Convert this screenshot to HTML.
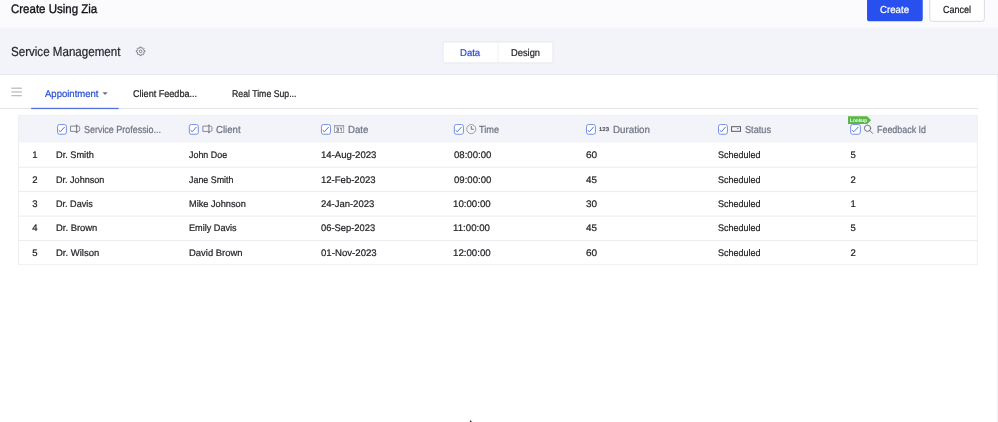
<!DOCTYPE html>
<html lang="en"><head><meta charset="utf-8"><title>Create Using Zia</title>
<style>
html,body{margin:0;padding:0;}
body{width:998px;height:422px;overflow:hidden;background:#ffffff;font-family:"Liberation Sans",sans-serif;}
#root{position:relative;width:998px;height:422px;overflow:hidden;background:#ffffff;}
.t{position:absolute;white-space:nowrap;margin:0;padding:0;text-rendering:geometricPrecision;transform-origin:0 0;-webkit-text-stroke:0.22px;}
.a{position:absolute;box-sizing:border-box;}
svg{position:absolute;overflow:visible;}
#txt{position:absolute;left:0;top:0;width:998px;height:422px;will-change:transform;}

</style></head>
<body>
<div id="root">
<svg width="998" height="422" viewBox="0 0 998 422" style="left:0;top:0;">
<rect x="0" y="0" width="998" height="27.8" fill="#fbfbfe"/>
<rect x="0" y="27.8" width="998" height="46.4" fill="#f3f4fa"/>
<rect x="0" y="74.1" width="998" height="0.9" fill="#e3e4ec"/>
<rect x="996.8" y="75" width="1.2" height="347" fill="#f0f0f6"/>
<rect x="867.05" y="-4" width="55.7" height="25.3" rx="2.6" fill="#2750ee"/>
<rect x="929.8" y="-4" width="54.6" height="25.3" rx="2.6" fill="#ffffff" stroke="#dadbe2" stroke-width="1"/>
<rect x="443.0" y="41.9" width="110.0" height="21.0" rx="1.5" fill="#ffffff" stroke="#e6e7ee" stroke-width="1"/>
<rect x="497.6" y="42.3" width="0.9" height="20.4" fill="#eeeff4"/>
<path d="M139.92 47.00 L141.28 47.00 L141.38 48.04 L142.35 48.44 L143.16 47.78 L144.12 48.74 L143.46 49.55 L143.86 50.52 L144.90 50.62 L144.90 51.98 L143.86 52.08 L143.46 53.05 L144.12 53.86 L143.16 54.82 L142.35 54.16 L141.38 54.56 L141.28 55.60 L139.92 55.60 L139.82 54.56 L138.85 54.16 L138.04 54.82 L137.08 53.86 L137.74 53.05 L137.34 52.08 L136.30 51.98 L136.30 50.62 L137.34 50.52 L137.74 49.55 L137.08 48.74 L138.04 47.78 L138.85 48.44 L139.82 48.04Z" fill="none" stroke="#62656d" stroke-width="0.75" stroke-linejoin="round"/>
<circle cx="140.6" cy="51.3" r="1.35" fill="none" stroke="#62656d" stroke-width="0.75"/>
<rect x="11.3" y="87.7" width="10.6" height="0.9" fill="#9fa0a5"/>
<rect x="11.3" y="91.5" width="10.6" height="0.9" fill="#9fa0a5"/>
<rect x="11.3" y="95.3" width="10.6" height="0.9" fill="#9fa0a5"/>
<path d="M102.5 92.2h5.2l-2.6 2.8z" fill="#666f94"/>
<rect x="0" y="108" width="978" height="1" fill="#e4e4e8"/>
<rect x="31.1" y="107.8" width="87.6" height="1.3" fill="#5571dc"/>
<rect x="18.1" y="115.2" width="959.4" height="27.3" fill="#f3f4fa"/>
<rect x="18.5" y="115.6" width="958.7" height="149.1" fill="none" stroke="#eeeef2" stroke-width="0.9"/>
<rect x="18.1" y="166.7" width="959.4" height="1" fill="#ececf0"/>
<rect x="18.1" y="191.1" width="959.4" height="1" fill="#ececf0"/>
<rect x="18.1" y="215.6" width="959.4" height="1" fill="#ececf0"/>
<rect x="18.1" y="240.0" width="959.4" height="1" fill="#ececf0"/>
<path d="M469.85 419.5V422.5H472.8z" fill="#111111" stroke="#ffffff" stroke-width="0.5"/>
</svg>
<svg width="998" height="422" viewBox="0 0 998 422" style="left:0;top:0;">
<rect x="57.52" y="124.55" width="8.90" height="9.7" rx="2" fill="#fffffc" stroke="#6683e6" stroke-width="0.9"/>
<path d="M59.07 130.6L60.47 131.7L64.32 127.3" fill="none" stroke="#3f62da" stroke-width="0.9" stroke-linecap="round" stroke-linejoin="round"/>
<rect x="189.30" y="124.55" width="9.00" height="9.7" rx="2" fill="#fffffc" stroke="#6683e6" stroke-width="0.9"/>
<path d="M190.87 130.6L192.28 131.7L196.17 127.3" fill="none" stroke="#3f62da" stroke-width="0.9" stroke-linecap="round" stroke-linejoin="round"/>
<rect x="321.45" y="124.55" width="9.10" height="9.7" rx="2" fill="#fffffc" stroke="#6683e6" stroke-width="0.9"/>
<path d="M323.04 130.6L324.47 131.7L328.40 127.3" fill="none" stroke="#3f62da" stroke-width="0.9" stroke-linecap="round" stroke-linejoin="round"/>
<rect x="454.35" y="124.55" width="9.10" height="9.7" rx="2" fill="#fffffc" stroke="#6683e6" stroke-width="0.9"/>
<path d="M455.94 130.6L457.37 131.7L461.30 127.3" fill="none" stroke="#3f62da" stroke-width="0.9" stroke-linecap="round" stroke-linejoin="round"/>
<rect x="586.52" y="124.55" width="8.90" height="9.7" rx="2" fill="#fffffc" stroke="#6683e6" stroke-width="0.9"/>
<path d="M588.07 130.6L589.47 131.7L593.32 127.3" fill="none" stroke="#3f62da" stroke-width="0.9" stroke-linecap="round" stroke-linejoin="round"/>
<rect x="718.52" y="124.55" width="8.90" height="9.7" rx="2" fill="#fffffc" stroke="#6683e6" stroke-width="0.9"/>
<path d="M720.07 130.6L721.47 131.7L725.32 127.3" fill="none" stroke="#3f62da" stroke-width="0.9" stroke-linecap="round" stroke-linejoin="round"/>
<rect x="850.65" y="124.55" width="9.70" height="9.7" rx="2" fill="#fffffc" stroke="#6683e6" stroke-width="0.9"/>
<path d="M852.36 130.6L853.88 131.7L858.04 127.3" fill="none" stroke="#3f62da" stroke-width="0.9" stroke-linecap="round" stroke-linejoin="round"/>
<g transform="translate(70.1,124.6)" fill="none" stroke="#6c6f77" stroke-width="0.8"><path d="M6 1.5H0.45V6.8H6"/><path d="M7 1.5H8Q9.6 1.5 9.6 3.2V5.1Q9.6 6.8 8 6.8H7"/><path d="M6.5 0.6V8M5.7 0.6H7.3M5.7 8H7.3" stroke="#55585f" stroke-width="0.8"/></g>
<g transform="translate(202.4,124.6)" fill="none" stroke="#6c6f77" stroke-width="0.8"><path d="M6 1.5H0.45V6.8H6"/><path d="M7 1.5H8Q9.6 1.5 9.6 3.2V5.1Q9.6 6.8 8 6.8H7"/><path d="M6.5 0.6V8M5.7 0.6H7.3M5.7 8H7.3" stroke="#55585f" stroke-width="0.8"/></g>
<g transform="translate(334.1,125)" fill="none"><rect x="0.4" y="0.4" width="9.2" height="7" stroke="#90939b" stroke-width="0.8" fill="#f9f9fc"/><path d="M0.4 1.9H9.6" stroke="#a0a3ab" stroke-width="0.7"/><path d="M2.2 3.1H4.2V6.3H2.2M2.8 4.7H4.2M6.0 3.6L7.2 3.0V6.5" stroke="#666971" stroke-width="0.85"/></g>
<g fill="none"><circle cx="471.25" cy="129.1" r="4.55" stroke="#80838b" stroke-width="0.75"/><path d="M471.3 126V129.25H473.9" stroke="#5a5d65" stroke-width="0.8"/></g>
<g transform="translate(731.1,126.2)"><rect x="0.5" y="0.5" width="8.9" height="4.6" fill="#f8f8fc" stroke="#55585f" stroke-width="1"/><path d="M5.6 2.1H7.8L6.7 3.2z" fill="#55585f"/></g>
<g fill="none" stroke="#5e6169" stroke-width="0.85" stroke-linecap="round"><circle cx="867.55" cy="128.25" r="3.15"/><path d="M869.9 130.6L872.8 133.5"/></g>
<path d="M848 116.3H867.2L871.1 120.15L867.2 124H848z" fill="#59b846"/>
</svg>

<div id="txt">
<div class="t" style="left:11.18px;top:3px;font-size:12.4px;line-height:12.4px;color:#111216;transform:scaleX(0.9271);-webkit-text-stroke:0.35px #111216;">Create Using Zia</div>
<div class="t" style="left:10.87px;top:45px;font-size:13.1px;line-height:13.1px;color:#24262b;transform:scaleX(0.8839);">Service Management</div>
<div class="t" style="left:880.31px;top:6px;font-size:10.1px;line-height:10.1px;color:#ffffff;transform:scaleX(0.9573);">Create</div>
<div class="t" style="left:942.94px;top:6px;font-size:10.1px;line-height:10.1px;color:#1b1c20;transform:scaleX(0.8925);">Cancel</div>
<div class="t" style="left:459.82px;top:49px;font-size:9.9px;line-height:9.9px;color:#2a4fd2;transform:scaleX(0.9652);">Data</div>
<div class="t" style="left:511.23px;top:49px;font-size:9.9px;line-height:9.9px;color:#222428;transform:scaleX(0.9434);">Design</div>
<div class="t" style="left:45.08px;top:90px;font-size:9.8px;line-height:9.8px;color:#2a4fd2;transform:scaleX(0.9721);">Appointment</div>
<div class="t" style="left:132.54px;top:90px;font-size:9.8px;line-height:9.8px;color:#222428;transform:scaleX(0.9264);">Client Feedba...</div>
<div class="t" style="left:231.89px;top:90px;font-size:9.8px;line-height:9.8px;color:#222428;transform:scaleX(0.8894);">Real Time Sup...</div>
<div class="t" style="left:83.69px;top:126px;font-size:10.2px;line-height:10.2px;color:#6e7280;transform:scaleX(0.8778);">Service Professio...</div>
<div class="t" style="left:216.31px;top:126px;font-size:10.2px;line-height:10.2px;color:#6e7280;transform:scaleX(0.9457);">Client</div>
<div class="t" style="left:348.01px;top:126px;font-size:10.2px;line-height:10.2px;color:#6e7280;transform:scaleX(0.9479);">Date</div>
<div class="t" style="left:479.29px;top:126px;font-size:10.2px;line-height:10.2px;color:#6e7280;transform:scaleX(0.9052);">Time</div>
<div class="t" style="left:612.60px;top:126px;font-size:10.2px;line-height:10.2px;color:#6e7280;transform:scaleX(0.9607);">Duration</div>
<div class="t" style="left:745.08px;top:126px;font-size:10.2px;line-height:10.2px;color:#6e7280;transform:scaleX(0.9008);">Status</div>
<div class="t" style="left:877.47px;top:126px;font-size:10.2px;line-height:10.2px;color:#6e7280;transform:scaleX(0.8748);">Feedback Id</div>
<div class="t" style="left:598.85px;top:128px;font-size:5.3px;line-height:5.3px;color:#3b3d44;letter-spacing:0.047px;transform:scaleX(1.1200);-webkit-text-stroke:0.2px #3b3d44;">123</div>
<div class="t" style="left:849.76px;top:120px;font-size:4.9px;line-height:4.9px;color:#ffffff;transform:scaleX(1.0677);-webkit-text-stroke:0.12px #ffffff;">Lookup</div>
<div class="t" style="left:32.13px;top:151px;font-size:9.5px;line-height:9.5px;color:#1f2024;">1</div>
<div class="t" style="left:56.34px;top:151px;font-size:9.5px;line-height:9.5px;color:#1f2024;transform:scaleX(0.9688);">Dr. Smith</div>
<div class="t" style="left:189.36px;top:151px;font-size:9.5px;line-height:9.5px;color:#1f2024;transform:scaleX(0.9377);">John Doe</div>
<div class="t" style="left:320.97px;top:151px;font-size:9.5px;line-height:9.5px;color:#1f2024;transform:scaleX(1.0095);">14-Aug-2023</div>
<div class="t" style="left:453.53px;top:151px;font-size:9.5px;line-height:9.5px;color:#1f2024;transform:scaleX(1.0100);">08:00:00</div>
<div class="t" style="left:585.59px;top:151px;font-size:9.5px;line-height:9.5px;color:#1f2024;transform:scaleX(1.0604);">60</div>
<div class="t" style="left:718.09px;top:151px;font-size:9.5px;line-height:9.5px;color:#1f2024;transform:scaleX(0.9486);">Scheduled</div>
<div class="t" style="left:850.57px;top:151px;font-size:9.5px;line-height:9.5px;color:#1f2024;">5</div>
<div class="t" style="left:32.26px;top:176px;font-size:9.5px;line-height:9.5px;color:#1f2024;">2</div>
<div class="t" style="left:56.36px;top:176px;font-size:9.5px;line-height:9.5px;color:#1f2024;transform:scaleX(0.9534);">Dr. Johnson</div>
<div class="t" style="left:189.36px;top:176px;font-size:9.5px;line-height:9.5px;color:#1f2024;transform:scaleX(0.9346);">Jane Smith</div>
<div class="t" style="left:320.97px;top:176px;font-size:9.5px;line-height:9.5px;color:#1f2024;transform:scaleX(1.0027);">12-Feb-2023</div>
<div class="t" style="left:453.53px;top:176px;font-size:9.5px;line-height:9.5px;color:#1f2024;transform:scaleX(1.0100);">09:00:00</div>
<div class="t" style="left:585.87px;top:176px;font-size:9.5px;line-height:9.5px;color:#1f2024;transform:scaleX(1.0352);">45</div>
<div class="t" style="left:718.09px;top:176px;font-size:9.5px;line-height:9.5px;color:#1f2024;transform:scaleX(0.9486);">Scheduled</div>
<div class="t" style="left:850.56px;top:176px;font-size:9.5px;line-height:9.5px;color:#1f2024;">2</div>
<div class="t" style="left:32.29px;top:200px;font-size:9.5px;line-height:9.5px;color:#1f2024;">3</div>
<div class="t" style="left:56.36px;top:200px;font-size:9.5px;line-height:9.5px;color:#1f2024;transform:scaleX(0.9543);">Dr. Davis</div>
<div class="t" style="left:188.74px;top:200px;font-size:9.5px;line-height:9.5px;color:#1f2024;transform:scaleX(0.9700);">Mike Johnson</div>
<div class="t" style="left:321.22px;top:200px;font-size:9.5px;line-height:9.5px;color:#1f2024;transform:scaleX(0.9972);">24-Jan-2023</div>
<div class="t" style="left:453.16px;top:200px;font-size:9.5px;line-height:9.5px;color:#1f2024;transform:scaleX(1.0199);">10:00:00</div>
<div class="t" style="left:585.72px;top:200px;font-size:9.5px;line-height:9.5px;color:#1f2024;transform:scaleX(1.0474);">30</div>
<div class="t" style="left:718.09px;top:200px;font-size:9.5px;line-height:9.5px;color:#1f2024;transform:scaleX(0.9486);">Scheduled</div>
<div class="t" style="left:850.43px;top:200px;font-size:9.5px;line-height:9.5px;color:#1f2024;">1</div>
<div class="t" style="left:32.29px;top:224px;font-size:9.5px;line-height:9.5px;color:#1f2024;">4</div>
<div class="t" style="left:56.33px;top:224px;font-size:9.5px;line-height:9.5px;color:#1f2024;transform:scaleX(0.9918);">Dr. Brown</div>
<div class="t" style="left:188.75px;top:224px;font-size:9.5px;line-height:9.5px;color:#1f2024;transform:scaleX(0.9610);">Emily Davis</div>
<div class="t" style="left:321.33px;top:224px;font-size:9.5px;line-height:9.5px;color:#1f2024;transform:scaleX(0.9863);">06-Sep-2023</div>
<div class="t" style="left:453.16px;top:224px;font-size:9.5px;line-height:9.5px;color:#1f2024;transform:scaleX(1.0199);">11:00:00</div>
<div class="t" style="left:585.87px;top:224px;font-size:9.5px;line-height:9.5px;color:#1f2024;transform:scaleX(1.0352);">45</div>
<div class="t" style="left:718.09px;top:224px;font-size:9.5px;line-height:9.5px;color:#1f2024;transform:scaleX(0.9486);">Scheduled</div>
<div class="t" style="left:850.57px;top:224px;font-size:9.5px;line-height:9.5px;color:#1f2024;">5</div>
<div class="t" style="left:32.27px;top:249px;font-size:9.5px;line-height:9.5px;color:#1f2024;">5</div>
<div class="t" style="left:56.32px;top:249px;font-size:9.5px;line-height:9.5px;color:#1f2024;transform:scaleX(0.9974);">Dr. Wilson</div>
<div class="t" style="left:188.73px;top:249px;font-size:9.5px;line-height:9.5px;color:#1f2024;transform:scaleX(0.9932);">David Brown</div>
<div class="t" style="left:321.32px;top:249px;font-size:9.5px;line-height:9.5px;color:#1f2024;transform:scaleX(1.0142);">01-Nov-2023</div>
<div class="t" style="left:453.16px;top:249px;font-size:9.5px;line-height:9.5px;color:#1f2024;transform:scaleX(1.0199);">12:00:00</div>
<div class="t" style="left:585.59px;top:249px;font-size:9.5px;line-height:9.5px;color:#1f2024;transform:scaleX(1.0604);">60</div>
<div class="t" style="left:718.09px;top:249px;font-size:9.5px;line-height:9.5px;color:#1f2024;transform:scaleX(0.9486);">Scheduled</div>
<div class="t" style="left:850.56px;top:249px;font-size:9.5px;line-height:9.5px;color:#1f2024;">2</div>
</div>
</div>
</body></html>
